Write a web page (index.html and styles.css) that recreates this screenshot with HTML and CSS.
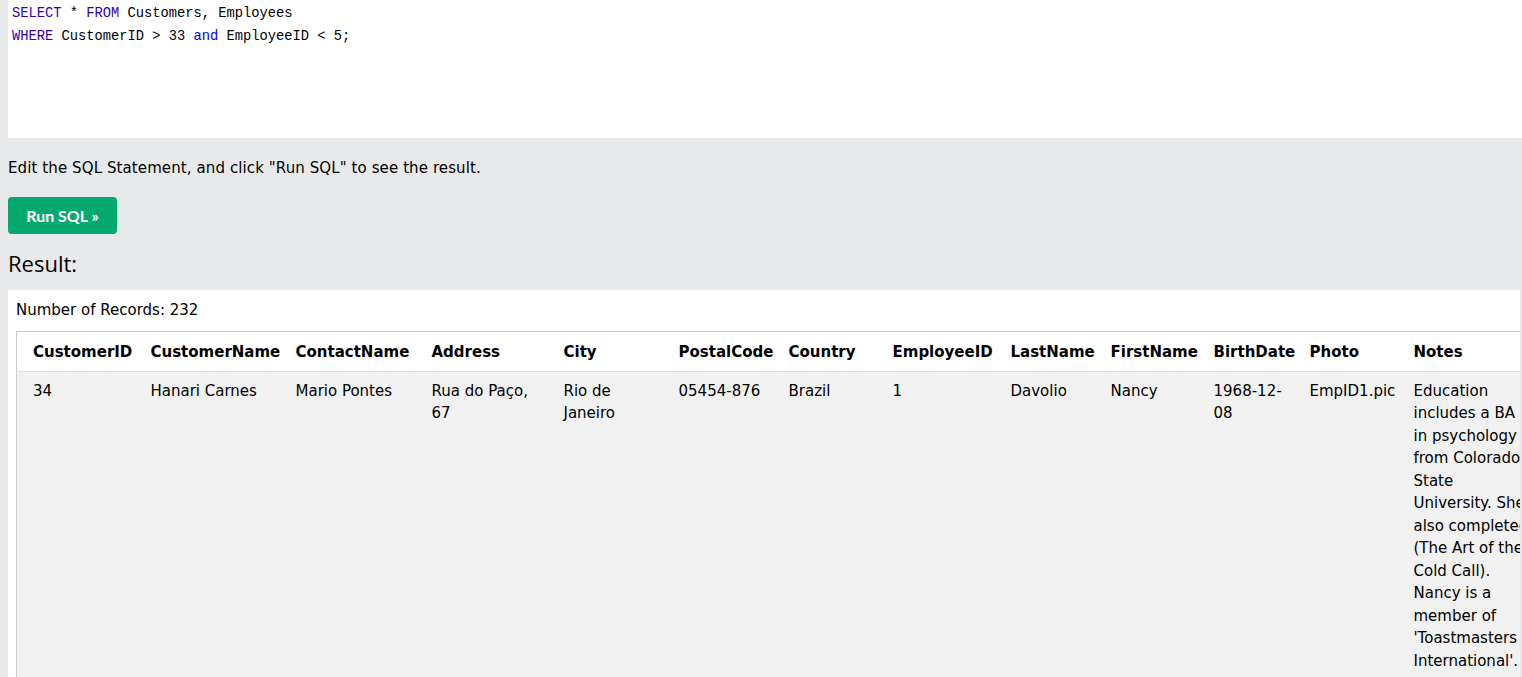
FILE: index.html
```html
<!DOCTYPE html>
<html>
<head>
<meta charset="utf-8">
<link rel="stylesheet" href="styles.css">
</head>
<body>
<div class="editor"><div class="code-line"><span class="kw">SELECT</span> * <span class="kw">FROM</span> Customers, Employees</div><div class="code-line"><span class="kw">WHERE</span> CustomerID &gt; 33 <span class="op">and</span> EmployeeID &lt; 5;</div></div>
<p class="hint">Edit the SQL Statement, and click "Run SQL" to see the result.</p>
<button class="run-btn">Run SQL »</button>
<h2 class="result-title">Result:</h2>
<div class="result-panel">
  <div class="records">Number of Records: 232</div>
  <table class="result-table">
    <colgroup>
      <col class="c1"><col class="c2"><col class="c3"><col class="c4"><col class="c5"><col class="c6"><col class="c7"><col class="c8"><col class="c9"><col class="c10"><col class="c11"><col class="c12"><col class="c13">
    </colgroup>
    <thead>
      <tr>
        <th>CustomerID</th><th>CustomerName</th><th>ContactName</th><th>Address</th><th>City</th><th>PostalCode</th><th>Country</th><th>EmployeeID</th><th>LastName</th><th>FirstName</th><th>BirthDate</th><th>Photo</th><th>Notes</th>
      </tr>
    </thead>
    <tbody>
      <tr>
        <td>34</td><td>Hanari Carnes</td><td>Mario Pontes</td><td>Rua do Paço, 67</td><td>Rio de Janeiro</td><td>05454-876</td><td>Brazil</td><td>1</td><td>Davolio</td><td>Nancy</td><td>1968-12-08</td><td>EmpID1.pic</td><td>Education includes a BA in psychology from Colorado State University. She also completed (The Art of the Cold Call). Nancy is a member of 'Toastmasters International'.</td>
      </tr>
    </tbody>
  </table>
</div>
</body>
</html>
```
FILE: styles.css
```css
html, body {
  margin: 0;
  padding: 0;
}
body {
  background: #e7e9eb;
  padding-left: 8px;
  font-family: "DejaVu Sans", Verdana, sans-serif;
  font-size: 15px;
  line-height: 1.5;
  color: #000;
  overflow: hidden;
  height: 677px;
}
.editor {
  background: #fff;
  height: 138px;
  box-sizing: border-box;
  padding: 2px 4px;
  font-family: "Liberation Mono", "DejaVu Sans Mono", monospace;
  font-size: 13.75px;
  line-height: 23px;
  color: #000;
}
.kw { color: #3300aa; }
.op { color: #0000ff; }
.hint {
  margin: 19px 0 0;
  letter-spacing: 0.1px;
}
.run-btn {
  display: block;
  margin-top: 17px;
  width: 109px;
  height: 37px;
  border: none;
  border-radius: 4px;
  background: #04aa6d;
  color: #fff;
  font-family: Lato, "Liberation Sans", sans-serif;
  font-weight: 700;
  font-size: 16px;
  padding: 0;
}
.result-title {
  margin: 14px 0 0;
  font-family: "Open Sans", sans-serif;
  font-weight: 400;
  font-size: 22px;
  line-height: 30px;
  height: 42px;
}
.result-panel {
  background: #fff;
  margin-right: 2px;
  padding: 9px 0 0 8px;
  overflow: hidden;
  height: 400px;
}
.records {
  margin-bottom: 10px;
}
.result-table {
  border-collapse: collapse;
  table-layout: fixed;
  width: 1523px;
  border: 1px solid #ccc;
}
.result-table th,
.result-table td {
  padding: 8px;
  text-align: left;
  vertical-align: top;
}
.result-table th {
  padding-top: 9px;
  padding-bottom: 7px;
}
.result-table th:first-child,
.result-table td:first-child {
  padding-left: 16px;
}
.result-table th {
  font-weight: 700;
}
.result-table thead tr {
  border-bottom: 1px solid #ddd;
}
.result-table tbody tr {
  background: #f1f1f1;
}
.c1 { width: 126px; }
.c2 { width: 145px; }
.c3 { width: 136px; }
.c4 { width: 132px; }
.c5 { width: 115px; }
.c6 { width: 110px; }
.c7 { width: 104px; }
.c8 { width: 118px; }
.c9 { width: 100px; }
.c10 { width: 103px; }
.c11 { width: 96px; }
.c12 { width: 104px; }
.c13 { width: 134px; }
```
